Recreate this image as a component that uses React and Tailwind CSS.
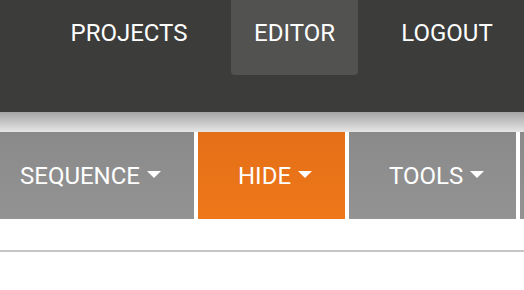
import React from "react";

const navItems = [
  { label: "PROJECTS", active: false, width: "w-[164px]" },
  { label: "EDITOR", active: true, width: "w-[127px]" },
  { label: "LOGOUT", active: false, width: "w-[138px]" },
];

function Caret() {
  return (
    <svg width="14" height="7" viewBox="0 0 14 7" className="ml-[7px] mt-[-2px]">
      <path d="M0 0H14L7 7Z" fill="#ffffff" />
    </svg>
  );
}

const tools = [
  { label: "SEQUENCE", width: "w-[194px]", pad: "pl-[20px]", color: "bg-gradient-to-b from-[#8a8a8a] to-[#939393]" },
  { label: "HIDE", width: "w-[147px]", pad: "pl-[40px]", color: "bg-gradient-to-b from-[#e46f17] to-[#ee7719]" },
  { label: "TOOLS", width: "w-[167px]", pad: "pl-[40px]", color: "bg-gradient-to-b from-[#8a8a8a] to-[#939393]" },
  { label: "", width: "w-[40px]", pad: "pl-[40px]", color: "bg-gradient-to-b from-[#8a8a8a] to-[#939393]" },
];

export default function App() {
  return (
    <div className="h-[290px] w-[524px] overflow-hidden bg-white font-['Roboto',sans-serif] text-[24px] text-white">
      <header className="flex h-[112px] justify-end gap-5 bg-[#3c3c3a] pr-2">
        {navItems.map((item) => (
          <div
            key={item.label}
            className={`h-[75px] shrink-0 rounded-b pt-[15px] text-center leading-[36px] ${item.width} ${item.active ? "bg-[#525250]" : ""}`}
          >
            {item.label}
          </div>
        ))}
      </header>
      <div className="h-[20px] bg-gradient-to-b from-[#a5a5a5] to-[#e6e6e6]" />
      <div className="flex gap-1 bg-white">
        {tools.map((tool, i) => (
          <button
            key={i}
            className={`flex h-[87px] shrink-0 items-center ${tool.width} ${tool.pad} ${tool.color}`}
          >
            {tool.label && (
              <>
                <span className="leading-none">{tool.label}</span>
                <Caret />
              </>
            )}
          </button>
        ))}
      </div>
      <div className="mt-[31px] h-[2px] bg-[#c6c6c6]" />
    </div>
  );
}
